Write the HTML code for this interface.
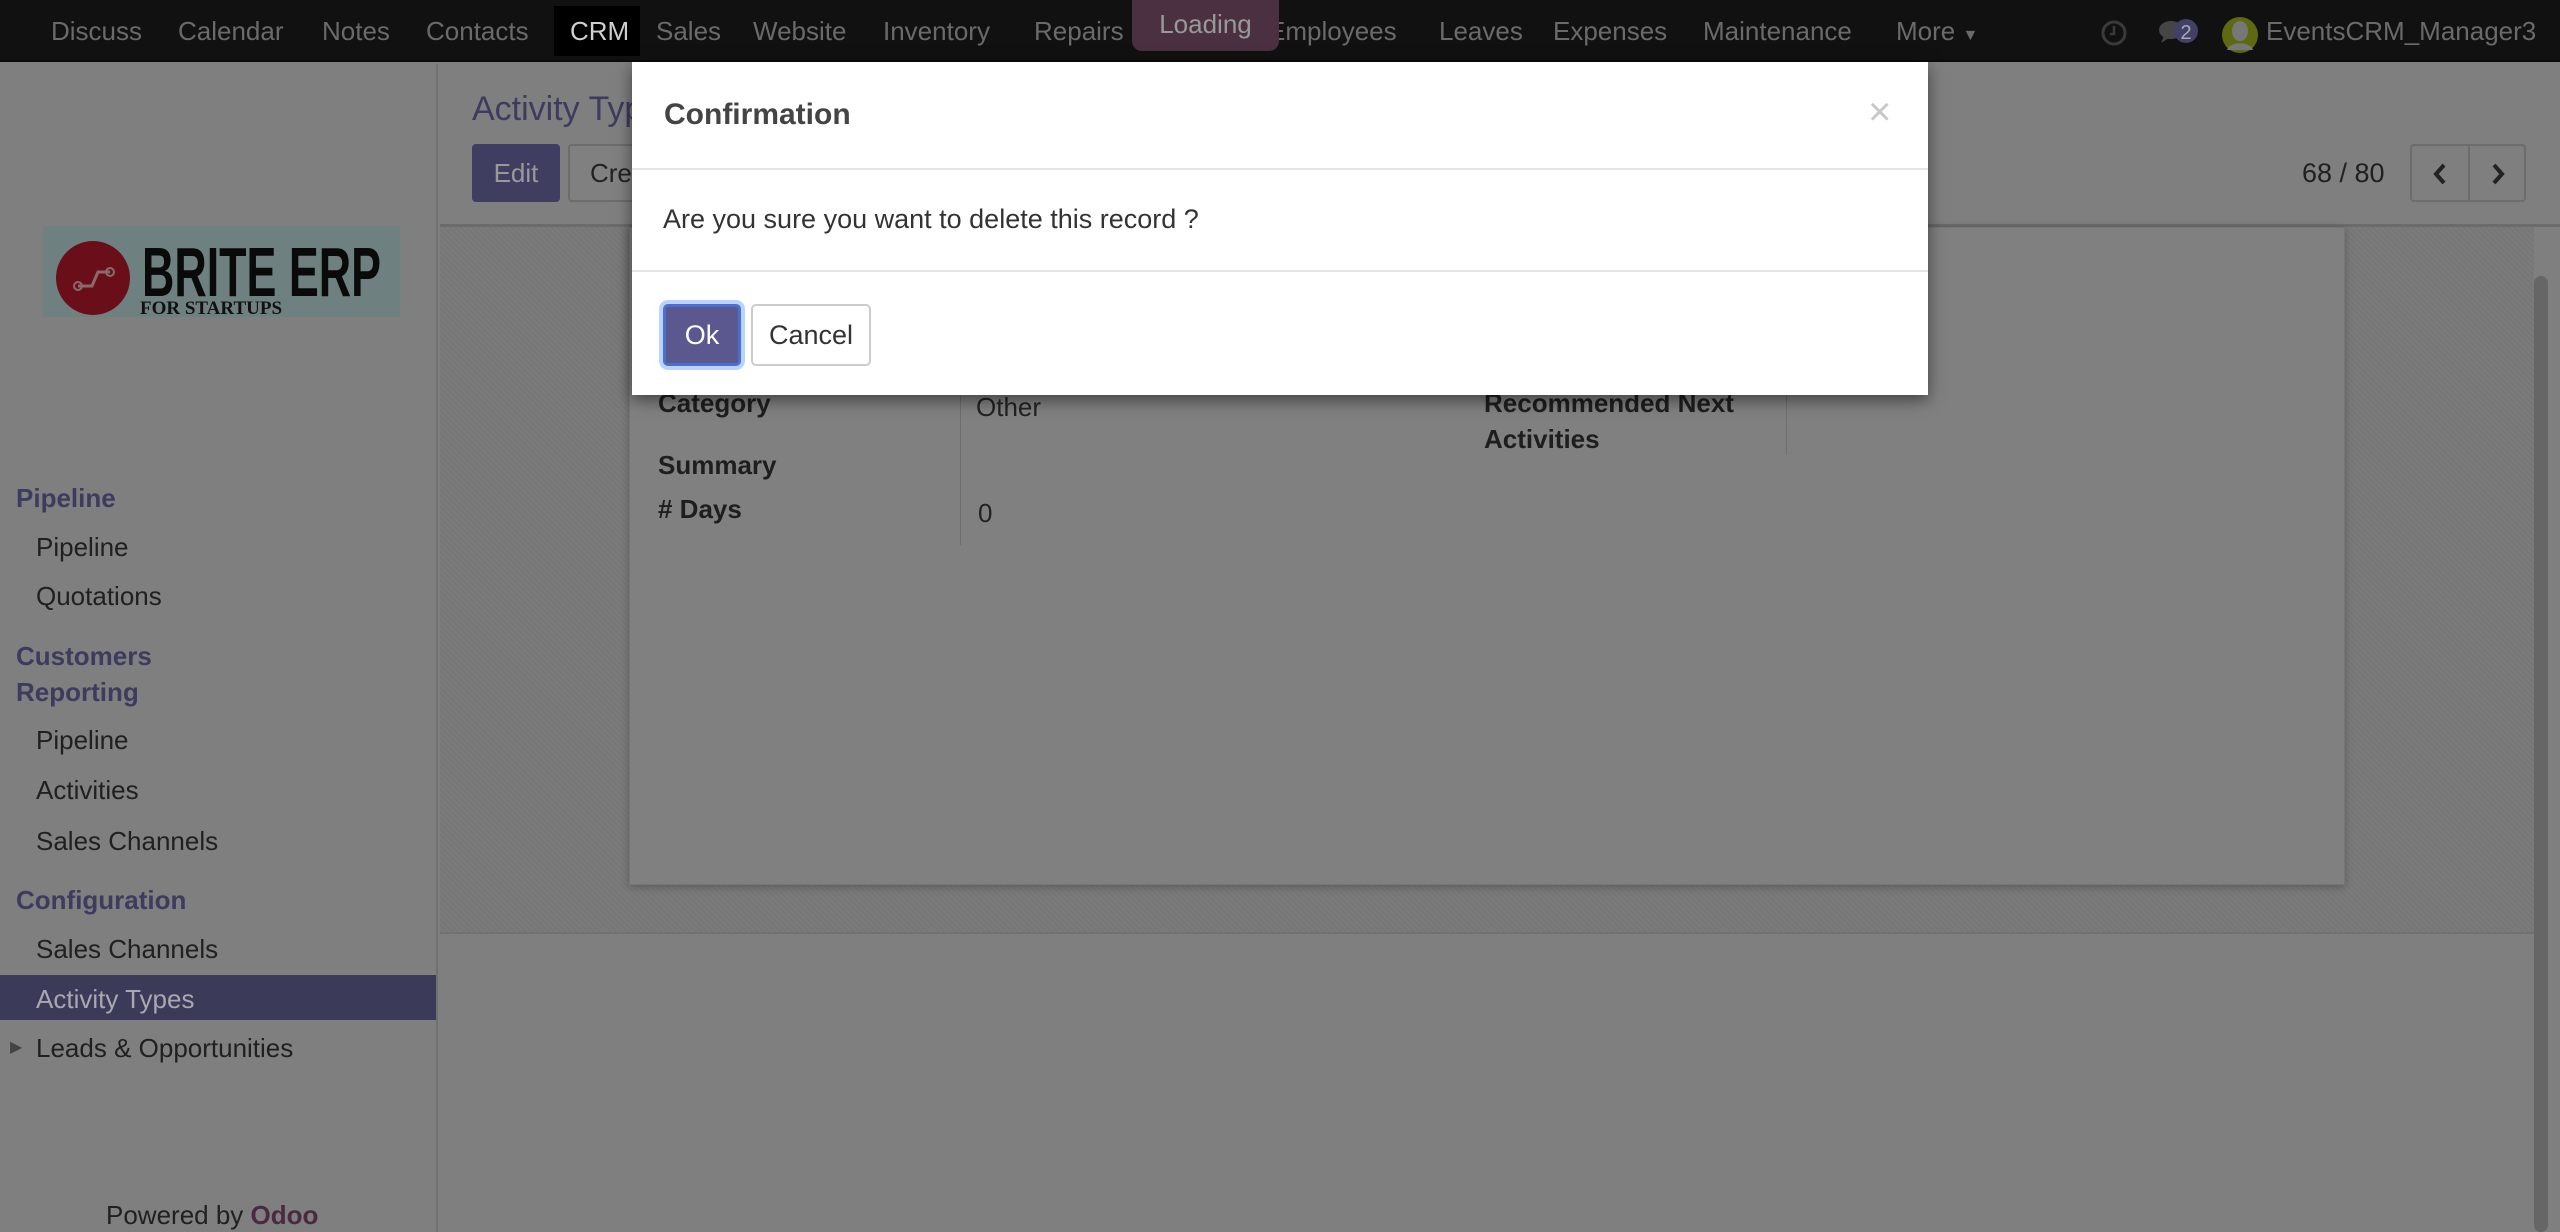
<!DOCTYPE html>
<html><head><meta charset="utf-8"><style>
*{margin:0;padding:0;box-sizing:border-box}
body{width:2560px;height:1232px;overflow:hidden;background:#7f7f7f;font-family:"Liberation Sans",sans-serif;position:relative}
.a{position:absolute;white-space:nowrap}
.nav{position:absolute;left:0;top:0;width:2560px;height:62px;background:#111;border-bottom:2px solid #0a0a0a}
.nav .a{top:17px;font-size:26px;line-height:28px;color:#6a6a6a}
.sb .a{font-size:26px;line-height:30px;color:#202020}
.sb .h{color:#3d3b5e;font-weight:bold}
.hatch{background-color:#7b7b7b;background-image:repeating-linear-gradient(45deg,rgba(0,0,0,.03) 0 2px,transparent 2px 4px)}
.f{font-size:26px;line-height:30px;color:#222}
.fb{font-weight:bold;color:#1e1e1e}
</style></head><body>
<div class="nav">
<div class="a" style="left:51px">Discuss</div>
<div class="a" style="left:178px">Calendar</div>
<div class="a" style="left:322px">Notes</div>
<div class="a" style="left:426px">Contacts</div>
<div style="position:absolute;left:554px;top:6px;width:86px;height:50px;background:#000"></div>
<div class="a" style="left:570px;color:#d0d0d0">CRM</div>
<div class="a" style="left:656px">Sales</div>
<div class="a" style="left:753px">Website</div>
<div class="a" style="left:883px">Inventory</div>
<div class="a" style="left:1034px">Repairs</div>
<div class="a" style="left:1268px">Employees</div>
<div class="a" style="left:1439px">Leaves</div>
<div class="a" style="left:1553px">Expenses</div>
<div class="a" style="left:1703px">Maintenance</div>
<div class="a" style="left:1896px">More <span style="font-size:16px">&#9660;</span></div>
<svg class="a" style="left:2100px;top:19px" width="28" height="28" viewBox="0 0 28 28"><circle cx="14" cy="14" r="11" fill="none" stroke="#3a3a3a" stroke-width="3"/><path d="M14 7v8h-4" stroke="#3a3a3a" stroke-width="2.5" fill="none"/></svg>
<svg class="a" style="left:2158px;top:18px" width="44" height="30" viewBox="0 0 44 30"><ellipse cx="13" cy="12" rx="12" ry="9" fill="#454545"/><path d="M6 18l-3 7 8-5z" fill="#454545"/><circle cx="28" cy="13" r="12" fill="#424067"/><text x="28" y="21" font-size="20" fill="#aaa" text-anchor="middle" font-family="Liberation Sans">2</text></svg>
<svg class="a" style="left:2222px;top:16px" width="36" height="38" viewBox="0 0 36 38"><circle cx="18" cy="19" r="18" fill="#5f6a10"/><ellipse cx="18" cy="15" rx="8" ry="10" fill="#777"/><path d="M5 34c3-9 23-9 26 0z" fill="#777"/></svg>
<div class="a" style="left:2266px">EventsCRM_Manager3</div>
<div style="position:absolute;left:1132px;top:0;width:147px;height:51px;background:#4a3040;border-radius:0 0 10px 10px;color:#999;font-size:26px;text-align:center;line-height:48px">Loading</div>
</div>

<div class="sb" style="position:absolute;left:0;top:64px;width:438px;height:1168px;border-right:2px solid #707070">
<div style="position:absolute;left:43px;top:162px;width:357px;height:91px;background:#6f8080"></div>
<div style="position:absolute;left:56px;top:177px;width:74px;height:74px;border-radius:50%;background:#6a0f1a"></div>
<svg class="a" style="left:70px;top:198px" width="46" height="32" viewBox="0 0 46 32"><path d="M8 24h14l6-14h12" stroke="#8a6a6a" stroke-width="3" fill="none"/><circle cx="8" cy="24" r="4" fill="none" stroke="#8a6a6a" stroke-width="2"/><circle cx="40" cy="10" r="4" fill="none" stroke="#8a6a6a" stroke-width="2"/></svg>
<div class="a" style="left:142px;top:172px;font-size:70px;line-height:72px;font-weight:bold;color:#0a0a0a;transform:scaleX(0.64);transform-origin:0 0">BRITE ERP</div>
<div class="a" style="left:140px;top:230px;font-family:'Liberation Serif',serif;font-size:19px;font-weight:bold;color:#111">FOR STARTUPS</div>
<div class="a h" style="left:16px;top:419px">Pipeline</div>
<div class="a" style="left:36px;top:468px">Pipeline</div>
<div class="a" style="left:36px;top:517px">Quotations</div>
<div class="a h" style="left:16px;top:577px">Customers</div>
<div class="a h" style="left:16px;top:613px">Reporting</div>
<div class="a" style="left:36px;top:661px">Pipeline</div>
<div class="a" style="left:36px;top:711px">Activities</div>
<div class="a" style="left:36px;top:762px">Sales Channels</div>
<div class="a h" style="left:16px;top:821px">Configuration</div>
<div class="a" style="left:36px;top:870px">Sales Channels</div>
<div style="position:absolute;left:0;top:911px;width:436px;height:45px;background:#3b3a58"></div>
<div class="a" style="left:36px;top:920px;color:#a8a8b0">Activity Types</div>
<div class="a" style="left:10px;top:969px;font-size:16px;color:#444">&#9654;</div>
<div class="a" style="left:36px;top:969px">Leads &amp; Opportunities</div>
<div class="a" style="left:106px;top:1136px;color:#202020">Powered by <b style="color:#4a2a40">Odoo</b></div>
</div>

<div class="a" style="left:472px;top:90px;font-size:34px;color:#3d3b5e">Activity Types</div>
<div style="position:absolute;left:472px;top:144px;width:88px;height:58px;background:#3f3d60;border-radius:4px;color:#999;font-size:26px;text-align:center;line-height:58px">Edit</div>
<div style="position:absolute;left:568px;top:144px;width:110px;height:58px;background:#808080;border:2px solid #6c6c6c;border-radius:4px;color:#222;font-size:26px;padding-left:20px;line-height:54px">Create</div>
<div class="a" style="left:2302px;top:158px;font-size:27px;color:#202020">68 / 80</div>
<div style="position:absolute;left:2410px;top:144px;width:116px;height:58px;border:2px solid #6c6c6c;border-radius:4px"><div style="position:absolute;left:56px;top:0;width:2px;height:54px;background:#6c6c6c"></div>
<svg class="a" style="left:18px;top:16px" width="20" height="24" viewBox="0 0 20 24"><path d="M14 3L6 12l8 9" stroke="#222" stroke-width="4" fill="none"/></svg>
<svg class="a" style="left:76px;top:16px" width="20" height="24" viewBox="0 0 20 24"><path d="M6 3l8 9-8 9" stroke="#222" stroke-width="4" fill="none"/></svg></div>
<div style="position:absolute;left:440px;top:224px;width:2120px;height:3px;background:#6c6c6c"></div>
<div class="hatch" style="position:absolute;left:440px;top:227px;width:2094px;height:707px;border-bottom:2px solid #727272"></div>
<div style="position:absolute;left:629px;top:227px;width:1716px;height:658px;background:#808080;box-shadow:0 2px 8px rgba(0,0,0,.25);border:1px solid #757575"></div>
<div style="position:absolute;left:2534px;top:276px;width:14px;height:956px;background:#666;border-radius:7px"></div>
<div class="a f fb" style="left:658px;top:388px">Category</div>
<div class="a f" style="left:976px;top:392px">Other</div>
<div class="a f fb" style="left:658px;top:450px">Summary</div>
<div class="a f fb" style="left:658px;top:494px"># Days</div>
<div class="a f" style="left:978px;top:498px">0</div>
<div style="position:absolute;left:960px;top:375px;width:1px;height:170px;background:#6e6e6e"></div>
<div class="a f fb" style="left:1484px;top:388px">Recommended Next</div>
<div class="a f fb" style="left:1484px;top:424px">Activities</div>
<div style="position:absolute;left:1786px;top:375px;width:1px;height:80px;background:#6e6e6e"></div>

<div style="position:absolute;left:632px;top:62px;width:1296px;height:333px;background:#fff;box-shadow:0 5px 15px rgba(0,0,0,.5)">
<div class="a" style="left:32px;top:36px;font-size:30px;font-weight:bold;color:#444">Confirmation</div>
<div class="a" style="left:1236px;top:28px;font-size:40px;color:#c8c8c8">&#215;</div>
<div style="position:absolute;left:0;top:106px;width:100%;height:2px;background:#e5e5e5"></div>
<div class="a" style="left:31px;top:142px;font-size:27px;color:#333">Are you sure you want to delete this record ?</div>
<div style="position:absolute;left:0;top:208px;width:100%;height:2px;background:#e5e5e5"></div>
<div style="position:absolute;left:31px;top:242px;width:78px;height:62px;background:#5b5890;border:3px solid #4a6fd0;border-radius:5px;box-shadow:0 0 0 4px #b8d4ff;color:#fff;font-size:27px;text-align:center;line-height:56px">Ok</div>
<div style="position:absolute;left:119px;top:242px;width:120px;height:62px;background:#fff;border:2px solid #ccc;border-radius:5px;color:#333;font-size:27px;text-align:center;line-height:58px">Cancel</div>
</div>
</body></html>
